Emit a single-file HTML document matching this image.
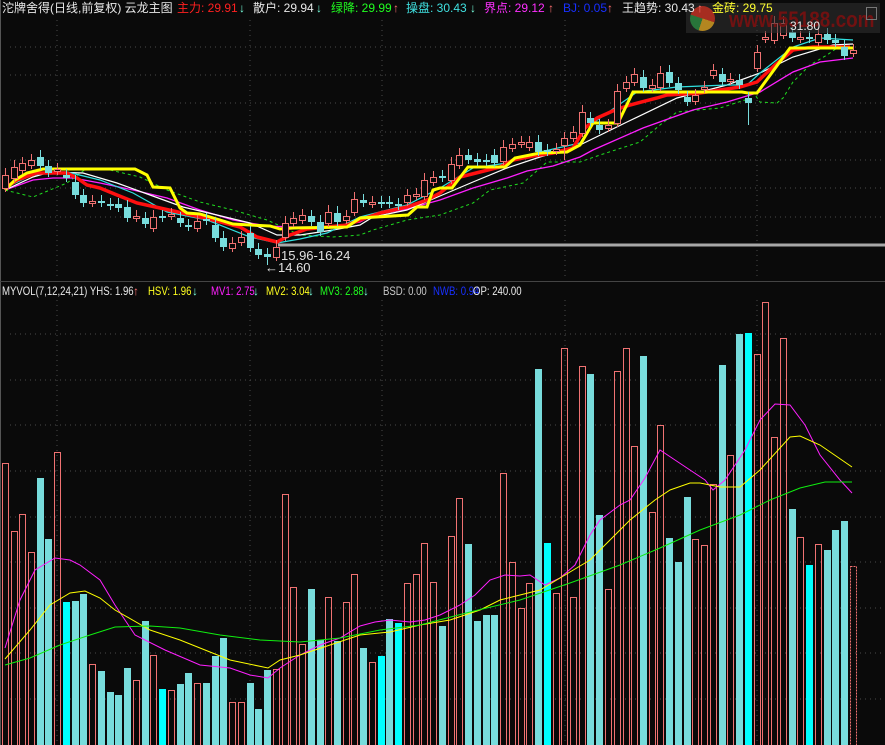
<!DOCTYPE html>
<html><head><meta charset="utf-8"><style>
html,body{margin:0;padding:0;background:#0a0a0a;width:885px;height:745px;overflow:hidden}
body{position:relative;font-family:"Liberation Sans","Noto Sans CJK SC",sans-serif;font-size:12px}
.t{position:absolute;white-space:nowrap;line-height:14px}
.v{transform:scaleX(0.8);transform-origin:0 0}
svg{position:absolute;left:0;top:0}
</style></head><body>
<svg id="s" width="885" height="745" xmlns="http://www.w3.org/2000/svg"></svg>
<div style="position:absolute;left:686px;top:3px;width:194px;height:30px;background:rgba(50,50,50,0.55);overflow:hidden">
<div style="position:absolute;left:4px;top:3px;width:25px;height:25px;border-radius:50%;background:conic-gradient(#c83020 0 30%,#d8a020 30% 55%,#2a8a40 55% 80%,#c83020 80%);opacity:.8"></div>
<div class="t" style="left:43px;top:5px;color:#7a1010;font-size:22px;line-height:24px;font-weight:bold;opacity:.9;transform:scaleX(0.86);transform-origin:0 0">www.55188.com</div>
</div>
<div style="position:absolute;left:866px;top:7px;width:9px;height:11px;border:1px solid #777"></div>
<div class="t" style="left:2px;top:1px;color:#e8e8e8">沱牌舍得(日线,前复权) 云龙主图</div>
<div class="t" style="left:177px;top:1px;color:#ff2020">主力: 29.91</div><div class="t" style="left:239px;top:1px;color:#7fd">↓</div>
<div class="t" style="left:253px;top:1px;color:#e8e8e8">散户: 29.94</div><div class="t" style="left:316px;top:1px;color:#7fd">↓</div>
<div class="t" style="left:331px;top:1px;color:#20ff20">绿降: 29.99</div><div class="t" style="left:393px;top:1px;color:#ff7070">↑</div>
<div class="t" style="left:406px;top:1px;color:#40e0e0">操盘: 30.43</div><div class="t" style="left:470px;top:1px;color:#7fd">↓</div>
<div class="t" style="left:484px;top:1px;color:#ff30ff">界点: 29.12</div><div class="t" style="left:548px;top:1px;color:#ff7070">↑</div>
<div class="t" style="left:563px;top:1px;color:#1830ff">BJ: 0.05</div><div class="t" style="left:607px;top:1px;color:#ff7070">↑</div>
<div class="t" style="left:622px;top:1px;color:#e8e8e8">王趋势: 30.43</div><div class="t" style="left:697px;top:1px;color:#ff7070">↑</div>
<div class="t" style="left:712px;top:1px;color:#ffff30">金砖: 29.75</div>
<div class="t" style="left:790px;top:19px;color:#e8e8e8">31.80</div>
<div class="t" style="left:281px;top:249px;color:#e0e0e0;font-size:13px">15.96-16.24</div>
<div class="t" style="left:265px;top:261px;color:#e0e0e0;font-size:13px">←14.60</div>
<div class="t v" style="left:2px;top:284px;color:#e8e8e8">MYVOL(7,12,24,21) YHS: 1.96</div><div class="t" style="left:133px;top:284px;color:#ff7070">↑</div>
<div class="t v" style="left:148px;top:284px;color:#ffff20">HSV: 1.96</div><div class="t" style="left:192px;top:284px;color:#7fd">↓</div>
<div class="t v" style="left:211px;top:284px;color:#ff20ff">MV1: 2.75</div><div class="t" style="left:253px;top:284px;color:#7fd">↓</div>
<div class="t v" style="left:266px;top:284px;color:#ffff20">MV2: 3.04</div><div class="t" style="left:308px;top:284px;color:#7fd">↓</div>
<div class="t v" style="left:320px;top:284px;color:#20ff20">MV3: 2.88</div><div class="t" style="left:363px;top:284px;color:#7fd">↓</div>
<div class="t v" style="left:383px;top:284px;color:#c8c8c8">BSD: 0.00</div>
<div class="t v" style="left:433px;top:284px;color:#1830ff">NWB: 0.94</div>
<div class="t v" style="left:473px;top:284px;color:#e8e8e8">OP: 240.00</div>
<script>
var S=document.getElementById('s'),h='';
function L(x1,y1,x2,y2,c,w,d){h+='<line x1="'+x1+'" y1="'+y1+'" x2="'+x2+'" y2="'+y2+'" stroke="'+c+'" stroke-width="'+w+'"'+(d?' stroke-dasharray="'+d+'"':'')+'/>';}
function P(pts,c,w,d){h+='<polyline fill="none" stroke="'+c+'" stroke-width="'+w+'"'+(d?' stroke-dasharray="'+d+'"':'')+' points="'+pts.map(function(p){return p.join(',')}).join(' ')+'"/>';}
[47,75,103,132,160,188,217].forEach(function(y){L(10,y,885,y,'#4a4a4a',1,'1 4')});
[334,380,425,471,517,562,608,653,699].forEach(function(y){L(10,y,885,y,'#4a4a4a',1,'1 4')});
[57,250,382,565,757].forEach(function(x){L(x,20,x,280,'#4a4a4a',1,'1 4');L(x,300,x,745,'#4a4a4a',1,'1 4')});
L(0.5,0,0.5,745,'#555',1);L(0,281.5,885,281.5,'#444',1);
var V=[[2,463,'r'],[11,531,'r'],[19,514,'r'],[28,552,'r'],[37,478,'c'],[45,539,'c'],[54,452,'r'],[63,602,'b'],[72,601,'c'],[80,594,'c'],[89,664,'r'],[98,671,'c'],[107,692,'c'],[115,695,'c'],[124,668,'c'],[133,680,'r'],[142,621,'c'],[150,655,'r'],[159,689,'b'],[168,690,'r'],[177,684,'c'],[185,673,'c'],[194,683,'r'],[203,683,'c'],[212,656,'c'],[220,638,'c'],[229,702,'r'],[238,702,'r'],[247,683,'c'],[255,709,'c'],[264,670,'c'],[273,669,'r'],[282,494,'r'],
[290,587,'r'],[299,644,'r'],[308,589,'c'],[317,640,'c'],[325,597,'r'],[334,641,'c'],[343,602,'r'],[351,574,'r'],[360,648,'c'],[369,662,'r'],[378,656,'b'],[386,619,'c'],[395,623,'b'],[404,583,'r'],[413,574,'r'],[421,543,'r'],[430,582,'r'],[439,626,'c'],[448,536,'r'],[456,498,'r'],[465,544,'c'],[474,621,'c'],[483,615,'c'],[491,615,'c'],[500,473,'r'],[509,562,'r'],[518,608,'r'],[526,583,'r'],[535,369,'c'],[544,543,'b'],[553,593,'r'],[561,348,'r'],[570,597,'r'],[579,366,'r'],[587,374,'c'],
[596,515,'c'],[605,589,'r'],[614,371,'r'],[623,348,'r'],[631,446,'r'],[640,356,'c'],[649,512,'r'],[657,425,'r'],[666,538,'c'],[675,562,'c'],[684,497,'c'],[692,539,'r'],[701,545,'r'],[710,484,'r'],[719,365,'c'],[727,455,'r'],[736,334,'c'],[745,333,'b'],[754,354,'r'],[762,302,'r'],[771,437,'r'],[780,338,'r'],[789,509,'c'],[797,537,'r'],[806,565,'b'],[815,544,'r'],[824,550,'c'],[832,530,'c'],[841,521,'c'],[850,566,'d']];
var COL={r:'#f07272',c:'#78dcdc',b:'#00ffff',d:'#f07272'};
V.forEach(function(v){if(v[2]=='r'||v[2]=='d'){h+='<rect x="'+(v[0]+0.5)+'" y="'+(v[1]+0.5)+'" width="6" height="'+(745-v[1])+'" fill="none" stroke="'+COL[v[2]]+'" stroke-width="1"'+(v[2]=='d'?' stroke-dasharray="2 1"':'')+'/>';}else h+='<rect x="'+v[0]+'" y="'+v[1]+'" width="7" height="'+(745-v[1])+'" fill="'+COL[v[2]]+'"/>';});
P([[5,648],[20,600],[35,570],[55,558],[70,560],[80,565],[100,580],[115,605],[135,635],[165,650],[200,665],[230,668],[250,675],[268,678],[280,668],[300,655],[320,645],[340,638],[360,626],[375,622],[390,620],[410,622],[425,620],[440,615],[460,605],[475,595],[490,580],[505,575],[520,576],[530,575],[545,585],[560,578],[575,565],[590,535],[600,520],[620,505],[630,500],[645,478],[660,450],[675,460],[690,470],[705,480],[713,490],[725,480],[745,450],[760,420],[775,404],[790,405],[805,425],[820,455],[840,480],[852,493]],'#ff20ff',1);
P([[5,659],[30,630],[50,605],[70,593],[85,591],[100,598],[115,610],[150,630],[180,640],[230,660],[268,668],[280,660],[300,655],[330,645],[360,635],[390,632],[420,625],[450,620],[480,610],[500,600],[520,595],[540,590],[560,578],[590,560],[610,540],[630,520],[655,500],[670,490],[690,483],[700,483],[720,487],[740,487],[760,470],[790,437],[800,436],[820,445],[852,467]],'#ffff00',1);
P([[5,665],[30,658],[60,645],[90,635],[115,627],[150,626],[180,628],[220,635],[260,640],[300,642],[340,638],[380,630],[420,625],[470,612],[520,600],[570,583],[620,565],[660,548],[700,530],[740,515],[770,500],[800,488],[825,482],[852,482]],'#10ee10',1);
P([[5,190],[33,197],[67,183],[87,168],[110,170],[140,177],[167,190],[200,202],[233,210],[267,220],[300,235],[333,237],[360,235],[373,230],[407,220],[440,215],[473,203],[490,190],[523,183],[547,162],[580,162],[600,155],[640,142],[660,125],[677,112],[720,108],[745,100],[753,92],[760,102],[777,103],[783,98],[793,82],[810,65],[827,55],[837,48],[850,47]],'#20dd20',1,'3 3');
P([[5,190],[33,180],[53,178],[73,178],[100,183],[133,190],[167,198],[200,210],[233,220],[267,226],[293,227],[333,227],[360,222],[373,215],[407,209],[440,200],[473,188],[507,178],[527,171],[553,166],[580,157],[593,150],[643,128],[693,110],[727,102],[760,92],[793,72],[820,62],[853,58]],'#ff20ff',1.3);
P([[5,190],[33,177],[50,172],[83,173],[117,183],[150,195],[183,207],[217,215],[250,223],[277,235],[300,235],[333,230],[360,225],[373,217],[407,210],[440,196],[473,182],[507,168],[540,157],[580,145],[627,122],[677,98],[727,85],[760,73],[793,57],[833,45],[853,44]],'#ffffff',1.2);
P([[5,188],[30,176],[50,172],[67,172],[100,180],[133,193],[167,212],[207,220],[250,237],[277,243],[300,239],[327,233],[360,217],[407,205],[440,188],[473,168],[507,163],[540,152],[580,143],[593,123],[637,92],[677,87],[727,85],[747,85],[760,73],[793,47],[820,38],[853,40]],'#30e0e0',1.2);
P([[5,188],[17,180],[37,173],[67,173],[77,178],[87,185],[100,188],[117,195],[137,203],[160,208],[187,214],[213,220],[240,227],[257,237],[277,242],[290,235],[307,229],[327,227],[347,225],[360,220],[380,213],[407,207],[427,200],[440,193],[460,177],[480,172],[500,167],[513,160],[533,156],[553,153],[573,148],[585,128],[597,118],[615,110],[630,105],[657,98],[667,95],[700,93],[720,90],[740,87],[757,82],[775,65],[793,50],[813,47],[850,47]],'#ff1010',3.5);
P([[5,190],[15,180],[27,173],[43,169],[135,169],[147,175],[153,187],[170,188],[180,208],[187,213],[200,214],[220,220],[233,224],[250,225],[270,226],[280,229],[293,228],[347,227],[360,218],[408,215],[417,207],[427,207],[433,190],[440,188],[452,188],[468,167],[505,167],[515,158],[540,153],[567,152],[580,145],[593,123],[618,123],[633,92],[742,92],[748,93],[757,93],[790,48],[853,48]],'#ffff00',3);
L(278,245,885,245,'#a8a8a8',3);
var C=[[5,175,188],[13,167,178],[22,163,170],[32,160,165],[40,157,166],[48,166,173],[57,169,171],[67,175,178],[75,182,195],[83,195,203],[92,201,203],[100,201,203],[110,204,206],[118,204,208],[127,207,218],[136,216,218],[145,218,224],[153,217,228],[162,216,218],[172,214,216],[180,218,223],[188,225,227],[197,221,228],[207,219,221],[215,225,238],[223,238,247],[232,243,248],[240,237,242],[250,233,248],[258,249,255],[267,254,257],[276,247,257],[285,223,237],[293,218,223],[303,215,220],[312,216,222],[320,222,232],[328,212,223],[337,213,222],[346,216,220],[354,199,212],[363,200,203],[372,202,204],[382,202,204],[390,202,204],[398,204,206],[407,195,202],[415,194,196],[424,180,196],[433,177,182],[442,176,178],[451,164,180],[459,155,165],[468,155,160],[477,159,162],[487,160,162],[494,155,163],[503,147,161],[513,144,148],[522,142,144],[529,142,147],[538,142,152],[547,150,152],[555,149,151],[565,138,145],[573,132,138],[583,112,133],[592,118,123],[600,125,130],[608,125,128],[618,91,123],[627,82,88],[635,74,82],[643,77,88],[652,85,88],[660,73,87],[669,72,83],[678,83,90],[687,97,102],[696,95,101],[705,87,89],[713,70,75],[722,74,82],[731,79,81],[740,80,85],[749,98,103],[758,52,68],[767,37,39],[775,23,40],[783,23,35],[792,32,38],[800,37,39],[809,37,39],[818,34,42],[827,34,40],[835,40,43],[845,47,56],[853,50,53]];
C.forEach(function(c){var best=V[0];V.forEach(function(q){if(Math.abs(q[0]+3-c[0])<Math.abs(best[0]+3-c[0]))best=q});var t=best[2];var x=best[0]+3.5;var col=(t=='r'||t=='d')?'#f07272':'#78dcdc';
var hi=c[1]-4-((c[2]-c[1])>8?3:2),lo=c[2]+4;if(c[0]==749)lo=125;if(c[0]==267)lo=265;if(c[0]==565)lo=160;
L(x,hi,x,lo,col,1);
if(t=='r'||t=='d'){h+='<rect x="'+(best[0]+0.5)+'" y="'+(c[1]+0.5)+'" width="6" height="'+Math.max(1,c[2]-c[1])+'" fill="#0a0a0a" stroke="'+col+'" stroke-width="1"/>';}
else h+='<rect x="'+best[0]+'" y="'+c[1]+'" width="7" height="'+Math.max(1,c[2]-c[1])+'" fill="'+col+'"/>';});
S.innerHTML=h;
</script>
</body></html>
